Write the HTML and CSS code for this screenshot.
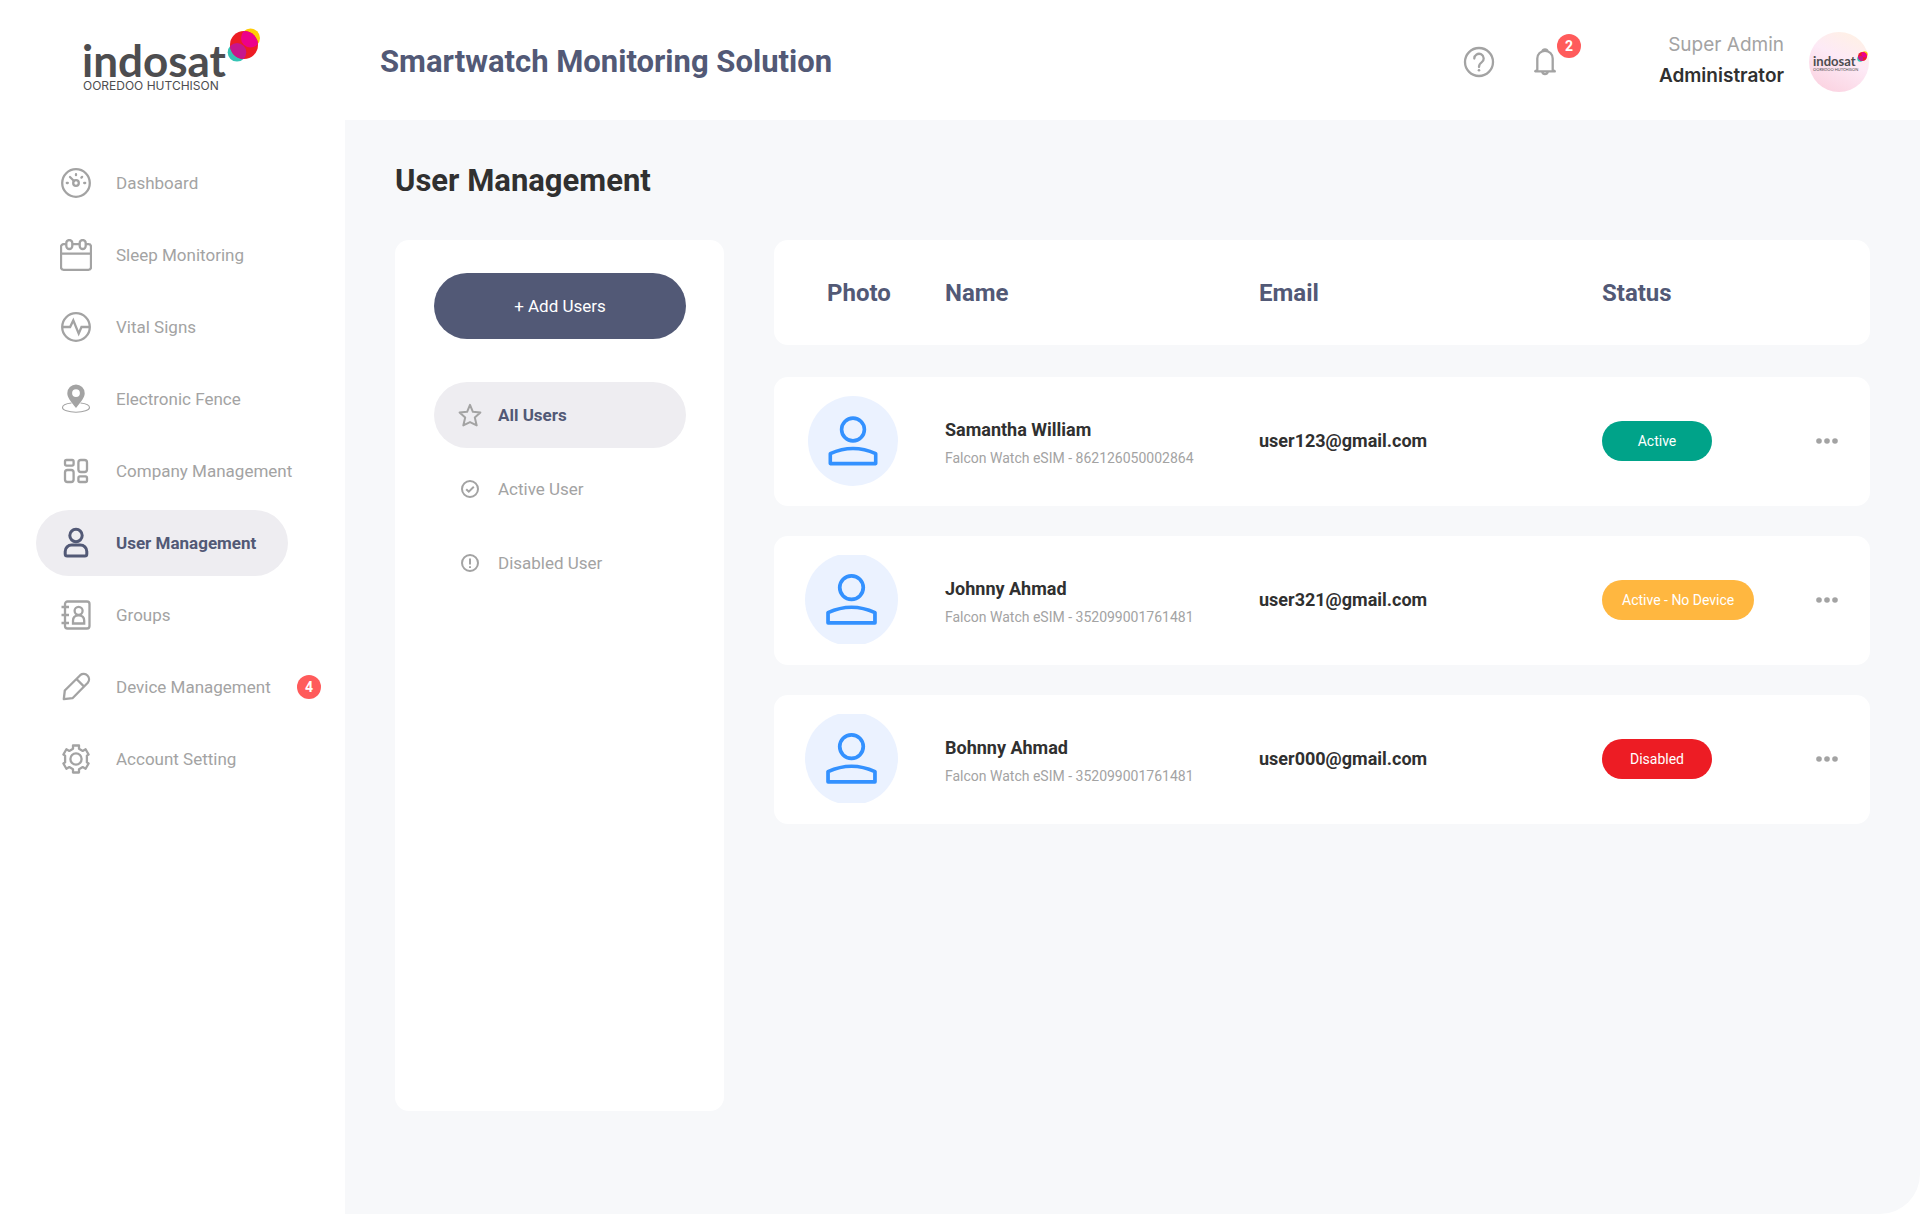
FILE: index.html
```html
<!DOCTYPE html>
<html lang="en">
<head>
<meta charset="utf-8">
<meta name="viewport" content="width=device-width, initial-scale=1">
<title>User Management</title>
<link rel="stylesheet" href="styles.css">
</head>
<body>
<svg class="defs" width="0" height="0" aria-hidden="true">
  <symbol id="dots" viewBox="0 0 24 8"><circle cx="4" cy="4" r="2.8"/><circle cx="12" cy="4" r="2.8"/><circle cx="20" cy="4" r="2.8"/></symbol>
  <symbol id="person" viewBox="0 0 90 90" preserveAspectRatio="xMidYMid slice">
    <circle cx="45" cy="45" r="45" fill="#ebf2ff"/>
    <g fill="none" stroke="#3391ff" stroke-width="3.6" stroke-linejoin="round"><circle cx="45" cy="33.5" r="11.4"/><path d="M22.3 67.6V57.7Q45 47.3 67.7 57.7V67.6Z"/></g>
  </symbol>
  <symbol id="orb" viewBox="0 0 34 34">
    <clipPath id="red-clip"><circle cx="17" cy="17" r="14"/></clipPath>
    <circle cx="23.5" cy="10" r="9.5" fill="#ffcb05"/>
    <circle cx="10" cy="24.3" r="9.3" fill="#35c4b5"/>
    <circle cx="17" cy="17" r="14" fill="#ed1c24"/>
    <g clip-path="url(#red-clip)"><circle cx="23.5" cy="10" r="9.5" fill="#ec008c"/><circle cx="10" cy="24.3" r="9.3" fill="#c6168d"/></g>
  </symbol>
</svg>
<div class="app">
  <aside class="sidebar">
    <a class="logo" href="#" aria-label="Indosat Ooredoo Hutchison">
      <svg width="180" height="68" viewBox="0 0 180 68">
        <text class="logo-name" x="0" y="51">indosat</text>
        <text class="logo-sub" x="1" y="64">OOREDOO HUTCHISON</text>
        <use href="#orb" x="145" y="2" width="34" height="34"/>
      </svg>
    </a>
    <nav aria-label="Main">
      <ul class="nav">
        <li><a href="#"><svg class="icon" viewBox="0 0 32 32"><circle cx="16" cy="16" r="13.8"/><circle cx="16" cy="16" r="2.8"/><path d="M14 14l-4-4M16 8.2v-1M7.8 16h-1M25.2 16h-1M21.4 10.6l.7-.7" stroke-linecap="round"/></svg>Dashboard</a></li>
        <li><a href="#"><svg class="icon" viewBox="0 0 32 32"><path d="M6 5.2H3.600A2.600 2.600 0 0 0 1 7.800v20.400a2.600 2.600 0 0 0 2.600 2.600h24.800a2.600 2.600 0 0 0 2.600-2.600V7.800a2.600 2.600 0 0 0-2.600-2.600H26M12.600 5.200h6.800M1 14.600h30"/><rect x="6.3" y="1" width="6" height="9" rx="3"/><rect x="19.7" y="1" width="6" height="9" rx="3"/></svg>Sleep Monitoring</a></li>
        <li><a href="#"><svg class="icon" viewBox="0 0 32 32"><circle cx="16" cy="16" r="13.8"/><path d="M2.500 16h7.600l3.200-6.600 5.400 13.200 2.800-6.600h8"/></svg>Vital Signs</a></li>
        <li><a href="#"><svg class="icon" viewBox="0 0 32 32"><path class="solid" fill-rule="evenodd" d="M16 1.500a8.700 8.700 0 0 1 8.700 8.700c0 4.300-3 7.300-8.700 14.800-5.700-7.500-8.700-10.500-8.700-14.800A8.700 8.700 0 0 1 16 1.500zm0 4.700a3.900 3.900 0 1 0 0 7.800 3.900 3.900 0 0 0 0-7.800z"/><path class="thin" d="M11.500 20C6 20.600 2.500 22.300 2.500 24.400c0 2.700 6 4.800 13.500 4.800s13.500-2.100 13.500-4.800c0-2.100-3.500-3.800-9-4.400"/></svg>Electronic Fence</a></li>
        <li><a href="#"><svg class="icon" viewBox="0 0 32 32"><rect x="5" y="5" width="8.600" height="5.600" rx="1.500"/><rect x="5" y="15" width="8.600" height="12" rx="2.500"/><rect x="18.400" y="5" width="8.600" height="12" rx="2.500"/><rect x="18.400" y="21.400" width="8.600" height="5.600" rx="1.500"/></svg>Company Management</a></li>
        <li><a class="active" href="#" aria-current="page"><svg class="icon bold" viewBox="0 0 32 32"><circle cx="16" cy="8.500" r="6.200"/><path d="M5.200 27v-2.500a6.500 6.500 0 0 1 6.500-6.500h8.600a6.500 6.500 0 0 1 6.500 6.500V27a2 2 0 0 1-2 2H7.200a2 2 0 0 1-2-2z"/></svg>User Management</a></li>
        <li><a href="#"><svg class="icon" viewBox="0 0 32 32"><rect x="5" y="2.500" width="24.500" height="27" rx="2.500"/><circle cx="18.600" cy="11.800" r="4"/><path d="M13 24.500v-2.800c0-3.200 2-5.400 5.600-5.400s5.600 2.200 5.600 5.400v2.800zM1.500 8h7.500M1.500 16h7.500M1.500 24h7.500"/></svg>Groups</a></li>
        <li><a href="#"><svg class="icon" viewBox="0 0 32 32"><path d="M3.800 28.200l1-8.700L20.200 4.200a5.400 5.400 0 0 1 7.600 7.600L12.500 27.200zM16.500 8l7.600 7.600" stroke-linejoin="round"/></svg>Device Management</a><span class="badge">4</span></li>
        <li><a href="#"><svg class="icon" viewBox="0 0 32 32"><circle cx="16" cy="16" r="5.600"/><path stroke-linejoin="round" d="M13 2.500h6v3.300l3.700 2.100 2.900-1.600 3 5.200-1.700 1.100v6.800l1.700 1.100-3 5.200-2.900-1.600L19 26.200v3.300h-6v-3.300l-3.700-2.100-2.900 1.600-3-5.200 1.700-1.100v-6.800l-1.700-1.100 3-5.200 2.900 1.600L13 5.800z"/></svg>Account Setting</a></li>
      </ul>
    </nav>
  </aside>
  <div class="content">
    <header class="topbar">
      <p class="product">Smartwatch Monitoring Solution</p>
      <div class="tools">
        <button class="tool" type="button" aria-label="Help"><svg class="icon" viewBox="0 0 32 32"><circle cx="16" cy="16" r="14"/><path d="M11.300 12.500a4.700 4.700 0 1 1 7.300 3.900C16.800 17.600 16 18.500 16 21" stroke-linecap="round"/><circle class="solid" cx="16" cy="24.300" r="1.300"/></svg></button>
        <button class="tool" type="button" aria-label="Notifications"><svg class="icon" viewBox="0 0 32 32"><path stroke-linejoin="round" d="M8.300 24V12.500a7.700 7.700 0 0 1 15.400 0V24l2.100 1.300H6.200zM13.200 5.600a2.900 2.900 0 0 1 5.600 0M13.200 26a2.900 2.900 0 0 0 5.600 0"/></svg><span class="badge">2</span></button>
      </div>
      <div class="account">
        <p class="who"><span class="role">Super Admin</span><span class="account-name">Administrator</span></p>
        <svg class="profile" viewBox="0 0 60 60" role="img" aria-label="Indosat">
          <defs><linearGradient id="blush" x1="0.8" y1="0" x2="0.3" y2="1"><stop offset="0" stop-color="#fff1e4"/><stop offset=".45" stop-color="#fdeaf6"/><stop offset="1" stop-color="#fbd3e1"/></linearGradient></defs>
          <circle cx="30" cy="30" r="30" fill="url(#blush)"/>
          <text class="profile-name" x="4" y="34">indosat</text>
          <text class="profile-sub" x="4" y="39">OOREDOO HUTCHISON</text>
          <use href="#orb" x="48" y="19" width="11" height="11"/>
        </svg>
      </div>
    </header>
    <main class="main">
      <h1>User Management</h1>
      <div class="columns">
        <section class="card filters" aria-label="Filters">
          <button class="add" type="button">+ Add Users</button>
          <ul class="filter-list">
            <li><a class="active" href="#"><svg class="icon" viewBox="0 0 24 24"><path stroke-linejoin="round" d="M12 1.800l2.900 7 7.500.6-5.600 5 1.900 8L12 19.100l-6.700 3.300 1.900-8-5.600-5 7.500-.6z"/></svg>All Users</a></li>
            <li><a href="#"><svg class="icon" viewBox="0 0 24 24"><circle cx="12" cy="12" r="8"/><path d="M8.200 12.200l2.600 2.500 5-4.900"/></svg>Active User</a></li>
            <li><a href="#"><svg class="icon" viewBox="0 0 24 24"><circle cx="12" cy="12" r="8"/><path d="M12 7.500v6M12 15.200v1.800"/></svg>Disabled User</a></li>
          </ul>
        </section>
        <table class="users">
          <thead>
            <tr class="card"><th class="photo" scope="col">Photo</th><th scope="col">Name</th><th scope="col">Email</th><th scope="col">Status</th></tr>
          </thead>
          <tbody>
            <tr class="card">
              <td class="photo"><svg class="avatar"><use href="#person"/></svg></td>
              <td class="user"><p class="name">Samantha William</p><p class="device">Falcon Watch eSIM - 862126050002864</p></td>
              <td class="email">user123@gmail.com</td>
              <td class="state"><span class="pill green">Active</span><button class="more" type="button" aria-label="More"><svg><use href="#dots"/></svg></button></td>
            </tr>
            <tr class="card">
              <td class="photo"><svg class="avatar wide"><use href="#person"/></svg></td>
              <td class="user"><p class="name">Johnny Ahmad</p><p class="device">Falcon Watch eSIM - 352099001761481</p></td>
              <td class="email">user321@gmail.com</td>
              <td class="state"><span class="pill amber">Active - No Device</span><button class="more" type="button" aria-label="More"><svg><use href="#dots"/></svg></button></td>
            </tr>
            <tr class="card">
              <td class="photo"><svg class="avatar wide"><use href="#person"/></svg></td>
              <td class="user"><p class="name">Bohnny Ahmad</p><p class="device">Falcon Watch eSIM - 352099001761481</p></td>
              <td class="email">user000@gmail.com</td>
              <td class="state"><span class="pill red">Disabled</span><button class="more" type="button" aria-label="More"><svg><use href="#dots"/></svg></button></td>
            </tr>
          </tbody>
        </table>
      </div>
    </main>
  </div>
</div>
</body>
</html>
```
FILE: styles.css
```css
* { box-sizing: border-box; }

body, h1, p, ul { margin: 0; padding: 0; }
ul { list-style: none; }
a { color: inherit; text-decoration: none; }
button { border: 0; padding: 0; background: none; font: inherit; color: inherit; cursor: pointer; }

body {
  background: #fff;
  color: #303030;
  font: 17px/24px Roboto, "Liberation Sans", sans-serif;
}

.defs { position: absolute; }

.icon { flex: none; width: 32px; height: 32px; fill: none; stroke: #a3a3a3; stroke-width: 2.3; }
.icon .solid { fill: #a3a3a3; stroke: none; }
.icon .thin { stroke-width: 1.1; }
.icon.bold { stroke: #525976; stroke-width: 3; }

.badge {
  display: grid;
  place-items: center;
  width: 24px;
  height: 24px;
  border-radius: 50%;
  background: #ff5b5b;
  color: #fff;
  font-size: 14px;
  font-weight: 700;
  line-height: 16px;
}

.app { display: grid; grid-template-columns: 345px 1fr; min-height: 100vh; }

/* Sidebar */
.logo { display: block; height: 150px; padding: 26px 0 0 82px; }
.logo svg { display: block; }
.logo-name { font: 700 44px Lato, sans-serif; fill: #4d4d4f; }
.logo-sub { font: 400 12px Inter, sans-serif; fill: #4d4d4f; }

.nav { display: flex; flex-direction: column; gap: 6px; padding-left: 36px; }
.nav li { display: flex; align-items: center; }
.nav a {
  display: flex;
  align-items: center;
  gap: 24px;
  width: 252px;
  height: 66px;
  padding-left: 24px;
  border-radius: 33px;
  color: #a3a3a3;
  white-space: nowrap;
}
.nav .badge { margin-left: 9px; }
.nav .active, .filter-list .active { background: #eeedf1; color: #525976; font-weight: 700; }

/* Top bar */
.content { display: flex; flex-direction: column; min-width: 0; }
.topbar { display: flex; align-items: center; height: 120px; padding: 3px 51px 0 35px; }
.product { color: #525976; font-size: 31px; font-weight: 700; line-height: 40px; }
.tools { display: flex; gap: 34px; margin-left: auto; }
.tool { position: relative; width: 32px; height: 32px; }
.tool .badge { position: absolute; top: -12px; left: 28px; }
.account { display: flex; align-items: center; gap: 25px; margin-left: 96px; }
.who {
  display: flex;
  flex-direction: column;
  gap: 7px;
  width: 127px;
  padding-bottom: 2px;
  font: 19px/24px Inter, sans-serif;
  text-align: right;
}
.role { color: #a3a3a3; }
.account-name { font-weight: 600; }
.profile { width: 60px; height: 60px; }
.profile-name { font: 700 13px Lato, sans-serif; fill: #4d4d4f; }
.profile-sub { font: 400 4px Lato, sans-serif; fill: #4d4d4f; }

/* Page */
.main {
  flex: 1;
  display: flex;
  flex-direction: column;
  padding: 41px 50px 103px 50px;
  border-bottom-right-radius: 40px;
  background: #f7f8fa;
}
h1 { margin-bottom: 39px; font-size: 31px; line-height: 40px; }
.columns { flex: 1; display: grid; grid-template-columns: 329px 1fr; gap: 50px; }
.card { border-radius: 14px; background: #fff; }

.filters { padding: 33px 38px 33px 39px; }
.add { width: 100%; height: 66px; border-radius: 33px; background: #525976; color: #fff; }
.filter-list { display: flex; flex-direction: column; gap: 8px; margin-top: 43px; }
.filter-list a {
  display: flex;
  align-items: center;
  gap: 16px;
  height: 66px;
  padding-left: 24px;
  border-radius: 33px;
  color: #a3a3a3;
}
.filter-list .icon { width: 24px; height: 24px; stroke-width: 2; }

.users { display: block; }
.users thead { display: block; margin-bottom: 32px; }
.users tbody { display: flex; flex-direction: column; gap: 30px; }
.users tr {
  display: grid;
  grid-template-columns: 171px 314fr 343fr 268px;
  align-items: center;
  min-height: 129px;
  padding-bottom: 2px;
}
.users thead tr { min-height: 105px; padding: 0; }
.users th { padding: 0; color: #525976; font-size: 24px; line-height: 32px; text-align: left; }
.users th.photo { padding-left: 53px; }
.users td { padding: 0; }
.users td.photo { display: flex; justify-content: flex-end; padding-right: 47px; }
.avatar { width: 90px; height: 90px; }
.avatar.wide { width: 93px; height: 89px; }
.users td.user { padding-top: 5px; }
.name, .email { font-size: 18px; font-weight: 700; }
.device { margin-top: 6px; color: #a3a3a3; font-size: 14px; line-height: 20px; }
.state { display: flex; align-items: center; justify-content: space-between; }
.users td.state { padding-right: 31px; }
.pill {
  min-width: 110px;
  height: 40px;
  padding: 0 20px;
  border-radius: 20px;
  color: #fff;
  font-size: 14px;
  line-height: 40px;
  text-align: center;
}
.green { background: #00a389; }
.amber { background: #ffb740; }
.red { background: #ed1c24; }
.more { width: 24px; height: 24px; }
.more svg { display: block; width: 24px; height: 8px; fill: #a3a3a3; }
```
